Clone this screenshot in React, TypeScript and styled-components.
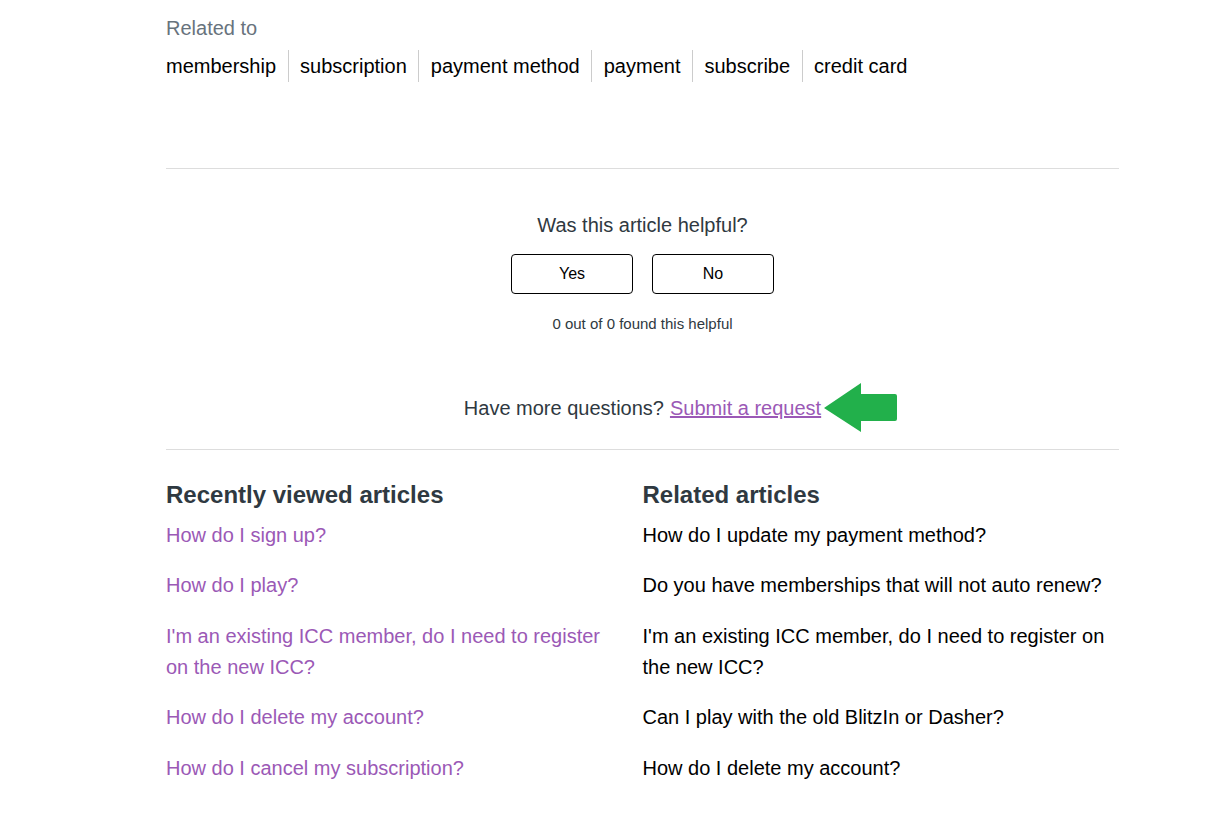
import React from "react";
import styled, { createGlobalStyle } from "styled-components";

const Global = createGlobalStyle`
  html, body { margin: 0; padding: 0; background: #fff; }
  body { font-family: "Liberation Sans", Arial, sans-serif; color: #2f3941; }
  * { box-sizing: border-box; }
`;

const Page = styled.div`
  width: 953px;
  margin-left: 166px;
  padding-top: 16px;
`;

const RelatedLabel = styled.div`
  font-size: 20px;
  color: #68737d;
  line-height: 24px;
`;

const TagList = styled.ul`
  list-style: none;
  margin: 10px 0 86px;
  padding: 0;
  display: flex;
`;

const Tag = styled.li`
  font-size: 20px;
  line-height: 32px;
  color: #000;
  padding: 0 11.5px;
  border-left: 1px solid #ccc;
  &:first-child { padding-left: 0; border-left: none; }
`;

const Divider = styled.hr`
  border: none;
  border-top: 1px solid #ddd;
  margin: 0;
`;

const Vote = styled.div`
  display: flex;
  flex-direction: column;
  align-items: center;
  padding-top: 43px;
`;

const VoteTitle = styled.div`
  font-size: 20px;
  line-height: 26px;
  color: #2f3941;
`;

const ButtonRow = styled.div`
  display: flex;
  gap: 19px;
  margin-top: 16px;
`;

const VoteButton = styled.button`
  width: 122px;
  height: 40px;
  border: 1px solid #000;
  border-radius: 4px;
  background: #fff;
  font-family: "Liberation Sans", Arial, sans-serif;
  font-size: 16px;
  color: #000;
`;

const VoteCount = styled.div`
  font-size: 15px;
  color: #2f3941;
  margin-top: 21px;
  line-height: 18px;
`;

const MoreQuestions = styled.div`
  display: flex;
  justify-content: center;
  align-items: center;
  margin-top: 62px;
  margin-bottom: 28px;
  font-size: 20px;
  line-height: 26px;
  color: #2f3941;
`;

const RequestLink = styled.a`
  color: #9b59b6;
  text-decoration: underline;
  margin-left: 6px;
  position: relative;
`;

const Arrow = styled.svg`
  position: absolute;
  left: 100%;
  top: 50%;
  margin-top: -26px;
  margin-left: 2px;
`;

const Columns = styled.div`
  display: grid;
  grid-template-columns: 1fr 1fr;
  padding-top: 30px;
`;

const Column = styled.section<{ $gutter?: boolean }>`
  padding-right: ${(p) => (p.$gutter ? "24px" : "0")};
`;

const Heading = styled.h3`
  margin: 0 0 10px;
  font-size: 24px;
  font-weight: bold;
  line-height: 30px;
  color: #2f3941;
`;

const ArticleList = styled.ul`
  list-style: none;
  margin: 0;
  padding: 0;
`;

const Article = styled.li<{ $visited?: boolean }>`
  font-size: 20px;
  line-height: 31px;
  margin-bottom: 19.4px;
  color: ${(p) => (p.$visited ? "#9b59b6" : "#000")};
`;

const recent = [
  "How do I sign up?",
  "How do I play?",
  "I'm an existing ICC member, do I need to register on the new ICC?",
  "How do I delete my account?",
  "How do I cancel my subscription?",
];

const related = [
  "How do I update my payment method?",
  "Do you have memberships that will not auto renew?",
  "I'm an existing ICC member, do I need to register on the new ICC?",
  "Can I play with the old BlitzIn or Dasher?",
  "How do I delete my account?",
];

const tags = ["membership", "subscription", "payment method", "payment", "subscribe", "credit card"];

export default function App() {
  return (
    <>
      <Global />
      <Page>
        <RelatedLabel>Related to</RelatedLabel>
        <TagList>
          {tags.map((t) => (
            <Tag key={t}>{t}</Tag>
          ))}
        </TagList>
        <Divider />
        <Vote>
          <VoteTitle>Was this article helpful?</VoteTitle>
          <ButtonRow>
            <VoteButton>Yes</VoteButton>
            <VoteButton>No</VoteButton>
          </ButtonRow>
          <VoteCount>0 out of 0 found this helpful</VoteCount>
        </Vote>
        <MoreQuestions>
          Have more questions?
          <RequestLink href="#">
            Submit a request
            <Arrow width="76" height="52" viewBox="0 0 76 52">
              <path d="M1 26 L38 1 L38 12 L72 12 Q74 12 74 14 L74 37 Q74 39 72 39 L38 39 L38 50 Z" fill="#22b04b" />
            </Arrow>
          </RequestLink>
        </MoreQuestions>
        <Divider />
        <Columns>
          <Column $gutter>
            <Heading>Recently viewed articles</Heading>
            <ArticleList>
              {recent.map((a) => (
                <Article key={a} $visited>
                  {a}
                </Article>
              ))}
            </ArticleList>
          </Column>
          <Column>
            <Heading>Related articles</Heading>
            <ArticleList>
              {related.map((a) => (
                <Article key={a}>{a}</Article>
              ))}
            </ArticleList>
          </Column>
        </Columns>
      </Page>
    </>
  );
}
